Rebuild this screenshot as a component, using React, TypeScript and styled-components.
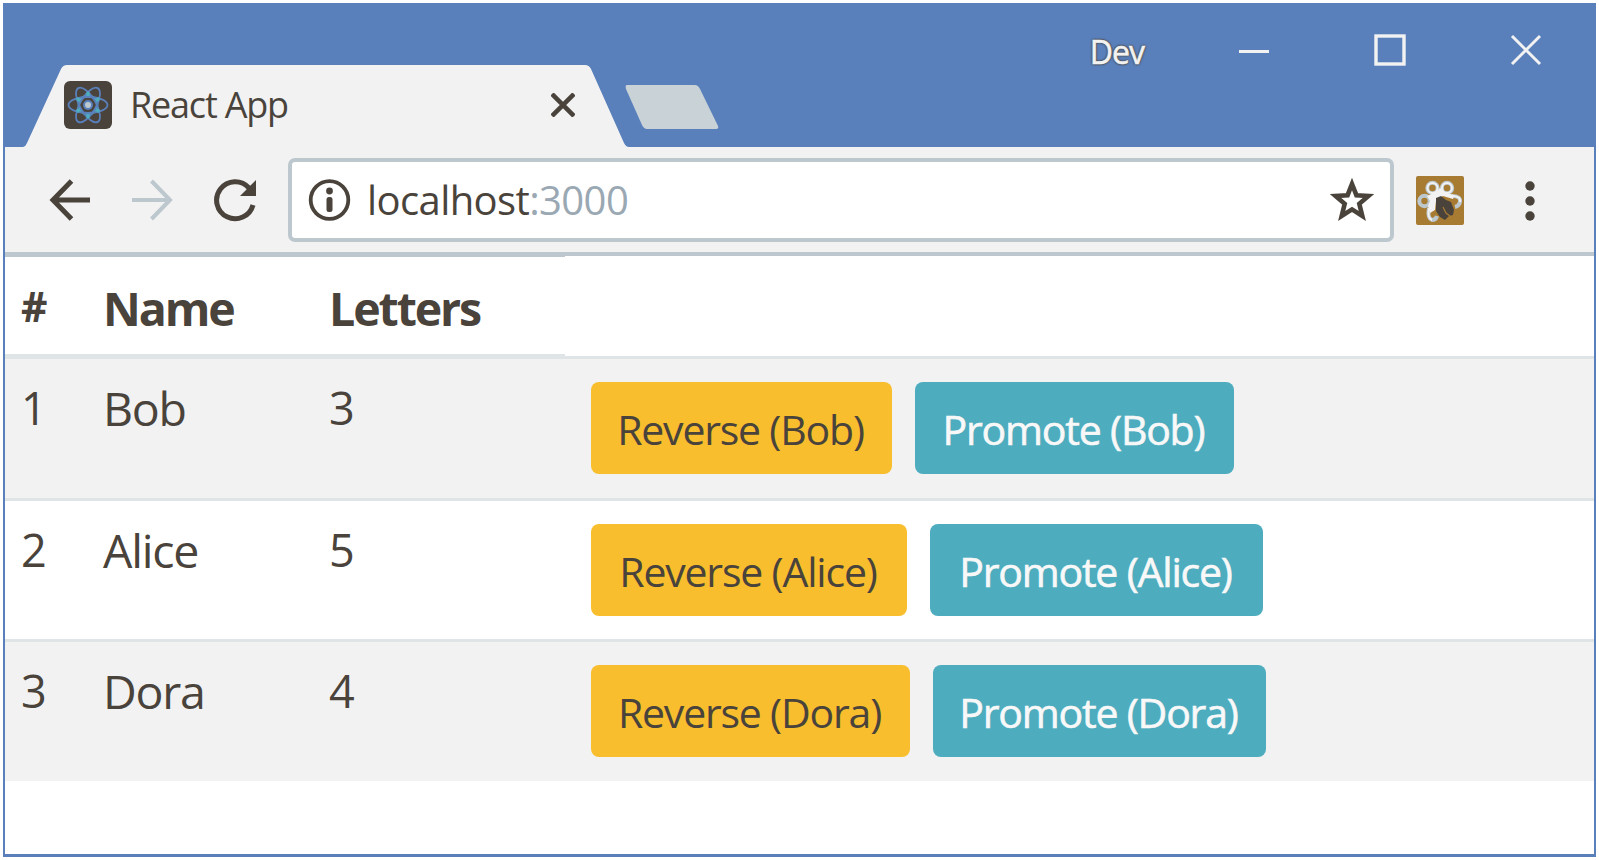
import React from "react";
import styled, { createGlobalStyle, css } from "styled-components";

const ink = "#49433b";
const blue = "#5a80bc";
const teal = "#4dacbe";
const paper = "#f2f2f2";
const line = "#bcc8ce";
const hairline = "#dfe4e6";

const GlobalStyle = createGlobalStyle`
  * { box-sizing: border-box; }
  body {
    margin: 0;
    background: #fff;
    color: ${ink};
    font-family: "Open Sans", "Noto Sans", sans-serif;
  }
`;

const Page = styled.div`
  width: 1599px;
  height: 860px;
  padding: 3px;
  overflow: hidden;
`;

const Window = styled.main`
  width: 1593px;
  height: 854px;
  border: 2px solid ${blue};
  border-bottom-width: 3px;
  background: #fff;
  display: flex;
  flex-direction: column;
`;

const TitleBar = styled.header`
  height: 142px;
  flex: none;
  display: flex;
  align-items: flex-start;
  background: ${blue};
`;

const Tab = styled.div`
  width: 606px;
  height: 82px;
  margin: 60px 0 0 18px;
  padding: 0 54px 2px 41px;
  display: flex;
  align-items: center;
  background: ${paper};
  clip-path: path("M0 82 Q3 81 4 78 L38 4 Q40 0 44 0 L562 0 Q566 0 568 4 L601 78 Q603 82 606 82 Z");
`;

const TabTitle = styled.span`
  flex: 1;
  margin-left: 18px;
  font-size: 36px;
  line-height: 48px;
  letter-spacing: -1.2px;
  margin-top: 0;
`;

const NewTab = styled.div`
  width: 94px;
  height: 44px;
  margin: 80px 0 0 -4px;
  background: #c9d3d7;
  clip-path: path("M2 0 L70 0 Q73 0 75 4 L93 41 Q94 44 91 44 L22 44 Q19 44 17 40 L1 4 Q0 0 2 0 Z");
`;

const Controls = styled.div`
  margin: 25px 52px 0 auto;
  display: flex;
  align-items: center;
  height: 40px;
`;

const Profile = styled.span`
  color: #f2f2f2;
  font-size: 32px;
  line-height: 40px;
  letter-spacing: -1px;
  margin: 4px 94px 0 0;
  -webkit-text-stroke: 0.6px #f2f2f2;
  text-shadow: 0 0 3px ${ink}, 0 0 2px ${ink}, 0 0 2px ${ink};
`;

const ControlIcon = styled.svg`
  width: 32px;
  height: 32px;
  margin-left: 104px;
  flex: none;
  &:first-of-type { margin-left: 0; }
`;

const Toolbar = styled.nav`
  height: 109px;
  flex: none;
  display: flex;
  align-items: center;
  padding: 1px 58px 0 44px;
  background: ${paper};
  border-bottom: 4px solid ${line};
`;

const NavIcon = styled.svg`
  width: 44px;
  height: 44px;
  flex: none;
  margin-right: 38px;
`;

const AddressBar = styled.div`
  width: 1106px;
  height: 84px;
  flex: none;
  display: flex;
  align-items: center;
  padding: 0 16px 0 15px;
  margin: 0 22px 0 -7px;
  background: #fff;
  border: 4px solid ${line};
  border-radius: 7px;
`;

const Url = styled.span`
  flex: 1;
  margin-left: 16px;
  font-size: 40px;
  line-height: 54px;
  letter-spacing: -0.6px;
  margin-top: 0;
`;

const Port = styled.span`
  color: #9aa8b3;
`;

const MenuIcon = styled.svg`
  width: 12px;
  height: 44px;
  flex: none;
  margin: 2px 0 0 auto;
`;

const Table = styled.section`
  display: flex;
  flex-direction: column;
`;

const Row = styled.div<{ $striped?: boolean }>`
  display: grid;
  grid-template-columns: 80px 226px 254px 1fr;
  height: 141.5px;
  border-top: 3px solid ${hairline};
  background: ${(p) => (p.$striped ? paper : "#fff")};
`;

const HeadRow = styled.div`
  display: grid;
  grid-template-columns: 80px 226px 254px 1fr;
  height: 100px;
`;

const cell = css`
  padding-left: 18px;
  font-size: 46.5px;
  line-height: 64px;
  letter-spacing: -1.2px;
  &:first-child { padding-left: 16px; }
`;

const HeadCell = styled.div<{ $tight?: boolean }>`
  ${cell}
  padding-top: 19px;
  font-weight: 700;
  letter-spacing: -2.1px;
  border-top: 1px solid ${line};
  border-bottom: 2px solid ${hairline};
  ${(p) => p.$tight && "font-size: 41px; padding-top: 17px;"}
`;

const Cell = styled.div`
  ${cell}
  padding-top: 17px;
`;

const NumberCell = styled(Cell)`
  font-size: 45px;
`;

const Actions = styled.div`
  display: flex;
  gap: 23px;
  padding: 23px 0 0 26px;
`;

const Button = styled.button<{ $kind: "warning" | "info"; $width: number }>`
  width: ${(p) => p.$width}px;
  height: 92px;
  padding: 2px 2px 0 0;
  border: 0;
  border-radius: 8px;
  font: 400 41px/56px "Open Sans", "Noto Sans", sans-serif;
  letter-spacing: -1.2px;
  white-space: nowrap;
  color: ${(p) => (p.$kind === "warning" ? ink : "#f8f8f8")};
  -webkit-text-stroke: ${(p) => (p.$kind === "warning" ? "0" : "0.6px #f8f8f8")};
  background: ${(p) => (p.$kind === "warning" ? "#f8be2d" : teal)};
`;

const people = [
  { name: "Bob", reverse: 301, promote: 319 },
  { name: "Alice", reverse: 316, promote: 333 },
  { name: "Dora", reverse: 319, promote: 333 },
];

const Favicon = () => (
  <svg width="48" height="48" viewBox="0 0 48 48">
    <rect width="48" height="48" rx="6" fill={ink} />
    <circle cx="24" cy="24" r="9.5" fill="none" stroke={teal} strokeWidth="2" />
    <g fill="none" stroke={blue} strokeWidth="1.8">
      {[0, 60, 120].map((a) => (
        <ellipse key={a} cx="24" cy="24" rx="19.5" ry="8" transform={`rotate(${a} 24 24)`} />
      ))}
    </g>
    {[30, 90, 150, 210, 270, 330].map((a) => (
      <circle key={a} cx="35.5" cy="24" r="1.9" fill={teal} transform={`rotate(${a} 24 24)`} />
    ))}
    <circle cx="24" cy="24" r="5" fill={blue} />
    <circle cx="24" cy="24" r="3" fill={line} />
  </svg>
);

const Extension = () => (
  <svg width="48" height="49" viewBox="0 0 48 49">
    <rect width="48" height="49" rx="2" fill="#a87b32" />
    <g fill="none" stroke={line} strokeWidth="4">
      <circle cx="16.5" cy="12" r="5.2" />
      <circle cx="31" cy="12" r="5.2" />
      <circle cx="8.5" cy="25" r="5.2" />
      <path d="M36 20Q45 20 44 26Q43 30 39 31" />
      <path d="M13 32Q11 42 16 44Q20 44 21 40" />
    </g>
    <path d="M11 20L20 16L24 12L28 16L38 19L37 23L27 20L20 25L19 34L14 37L12 30L14 25Z" fill={paper} />
    <g fill="none" stroke={paper} strokeWidth="2">
      <circle cx="16.5" cy="12" r="5" />
      <circle cx="31" cy="12" r="5" />
      <path d="M36 20Q45 20 44 26" />
      <path d="M13 32Q11 42 16 44" />
    </g>
    <path d="M20 22L25 20L30 24L35 26L38 34L37 39L33 40L29 44L24 41L20 35L20 30Z" fill={ink} />
    <path d="M27 31L30 37L34 40" fill="none" stroke="#a87b32" strokeWidth="1.2" />
  </svg>
);

export default function App() {
  return (
    <Page>
      <GlobalStyle />
      <Window>
        <TitleBar>
          <Tab>
            <Favicon />
            <TabTitle>React App</TabTitle>
            <svg width="24" height="24" viewBox="0 0 24 24" stroke={ink} strokeWidth="4.6">
              <path d="M1 1L23 23M23 1L1 23" />
            </svg>
          </Tab>
          <NewTab />
          <Controls>
            <Profile>Dev</Profile>
            <ControlIcon viewBox="0 0 32 32" fill="none" stroke={paper} strokeWidth="3">
              <path d="M1 17.5H31" />
            </ControlIcon>
            <ControlIcon viewBox="0 0 32 32" fill="none" stroke={paper} strokeWidth="3.4">
              <rect x="2" y="2" width="28" height="28" />
            </ControlIcon>
            <ControlIcon viewBox="0 0 32 32" fill="none" stroke={paper} strokeWidth="3">
              <path d="M2 2L30 30M30 2L2 30" />
            </ControlIcon>
          </Controls>
        </TitleBar>
        <Toolbar>
          <NavIcon viewBox="0 0 44 44" fill="none" stroke={ink} strokeWidth="5">
            <path d="M41 22H4M22.5 3L4 22L22.5 41" />
          </NavIcon>
          <NavIcon viewBox="0 0 44 44" fill="none" stroke={line} strokeWidth="4">
            <path d="M1 22H40M20.5 3L39 22L20.5 41" />
          </NavIcon>
          <NavIcon viewBox="0 0 44 44" fill="none" stroke={ink} strokeWidth="5">
            <path d="M40 27A18.5 18.5 0 1 1 36 10" />
            <path d="M43 2V18H27Z" fill={ink} stroke="none" />
          </NavIcon>
          <AddressBar>
            <svg width="44" height="44" viewBox="0 0 44 44">
              <circle cx="22.5" cy="22" r="18.8" fill="none" stroke={ink} strokeWidth="3.8" />
              <circle cx="22.5" cy="13" r="3.4" fill={ink} />
              <rect x="19.5" y="19" width="6" height="15" rx="2.5" fill={ink} />
            </svg>
            <Url>localhost<Port>:3000</Port></Url>
            <svg width="44" height="44" viewBox="0 0 44 44">
              <path d="M22 6L26.4 17.2L38.5 18L29.3 25.8L32.3 38L22 31.4L11.7 38L14.7 25.8L5.5 18L17.6 17.2Z" fill="none" stroke={ink} strokeWidth="4.6" />
            </svg>
          </AddressBar>
          <Extension />
          <MenuIcon viewBox="0 0 12 44" fill={ink}>
            <circle cx="6" cy="7" r="4.7" />
            <circle cx="6" cy="22" r="4.7" />
            <circle cx="6" cy="37" r="4.7" />
          </MenuIcon>
        </Toolbar>
        <Table>
          <HeadRow>
            <HeadCell $tight>#</HeadCell>
            <HeadCell>Name</HeadCell>
            <HeadCell>Letters</HeadCell>
          </HeadRow>
          {people.map((p, i) => (
            <Row key={p.name} $striped={i % 2 === 0}>
              <NumberCell>{i + 1}</NumberCell>
              <Cell>{p.name}</Cell>
              <NumberCell>{p.name.length}</NumberCell>
              <Actions>
                <Button $kind="warning" $width={p.reverse}>Reverse ({p.name})</Button>
                <Button $kind="info" $width={p.promote}>Promote ({p.name})</Button>
              </Actions>
            </Row>
          ))}
        </Table>
      </Window>
    </Page>
  );
}
